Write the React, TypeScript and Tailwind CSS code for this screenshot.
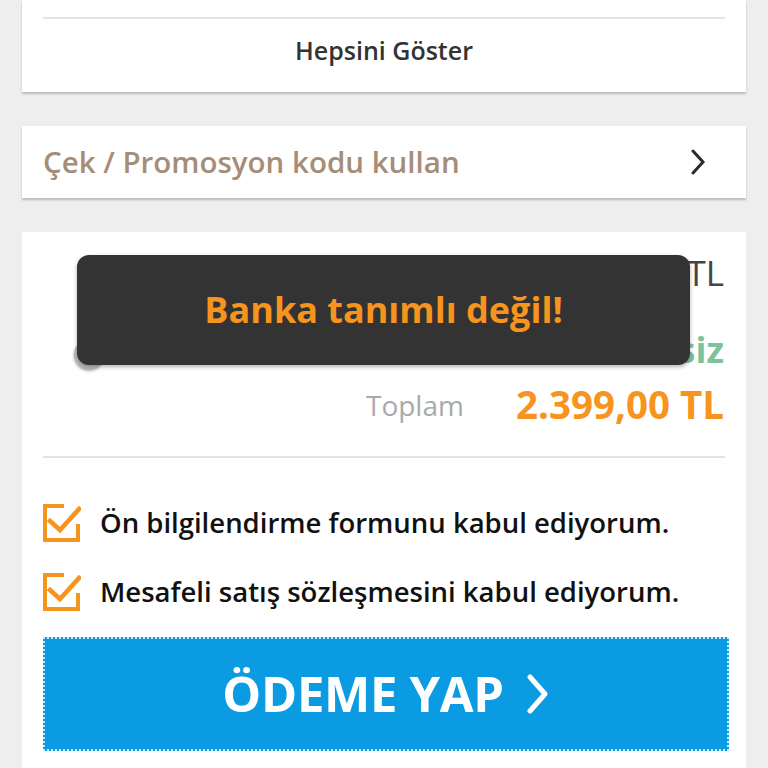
import React from "react";

function CheckIcon() {
  return (
    <svg width="38" height="38" viewBox="0 0 38 38" fill="none" className="shrink-0">
      <path d="M21 2 H2 V36 H35 V20" stroke="#f7941d" strokeWidth="4" />
      <path d="M7 17 L17 26 L36 5" stroke="#f7941d" strokeWidth="4.5" strokeLinecap="square" />
    </svg>
  );
}

function Agreement({ text }: { text: string }) {
  return (
    <div className="flex items-center h-[48px] gap-[19px]">
      <CheckIcon />
      <span className="text-[27.5px] font-semibold text-[#111]">{text}</span>
    </div>
  );
}

export default function App() {
  return (
    <div
      className="w-[768px] h-[768px] overflow-hidden bg-[#eeeeee]"
      style={{ fontFamily: '"Open Sans", "Noto Sans", sans-serif' }}
    >
      <div className="mx-[22px] flex flex-col gap-[34px]">
        {/* Product list card (top cut off) */}
        <div className="bg-white shadow-[0_2px_2px_rgba(0,0,0,0.22)]">
          <div className="h-[17px]" />
          <div className="mx-[21px] border-t-2 border-[#e3e3e3]" />
          <div className="h-[73px] pb-[10px] flex items-center justify-center text-[25px] font-semibold text-[#333]">
            Hepsini Göster
          </div>
        </div>

        {/* Promo code */}
        <div className="bg-white h-[72px] flex items-center justify-between pl-[21px] pr-[40px] shadow-[0_2px_2px_rgba(0,0,0,0.22)]">
          <span className="text-[29.5px] font-semibold text-[#a58d77]">Çek / Promosyon kodu kullan</span>
          <svg width="16" height="26" viewBox="0 0 16 26" fill="none">
            <path d="M3 2 L13 13 L3 24" stroke="#2b2b2b" strokeWidth="3" strokeLinecap="round" />
          </svg>
        </div>

        {/* Summary card */}
        <div className="relative bg-white h-[600px] px-[21px]">
          <div className="mt-[17px] h-[48px] flex items-center justify-end gap-[60px] pr-[1px]">
            <span className="text-[28px] text-[#999]">Ara Toplam</span>
            <span className="text-[35px] text-[#444]">2.399,00 TL</span>
          </div>
          <div className="mt-[29px] h-[48px] flex items-center justify-between pr-[1px]">
            <div className="flex items-center ml-[31px]">
              <span className="mt-[8px] w-[30px] h-[30px] rounded-full bg-[#bdbdbd] shadow-[0_2px_3px_rgba(0,0,0,0.35)]" />
              <span className="ml-[120px] text-[28px] text-[#555]">Standart teslimat, 1</span>
            </div>
            <span className="text-[36px] font-bold text-[#7cc39b]">Ücretsiz</span>
          </div>
          <div className="mt-[3px] h-[56px] flex items-center justify-end gap-[52px] pr-[1px]">
            <span className="text-[28px] text-[#a9a9a9]">Toplam</span>
            <span className="text-[38.5px] font-bold text-[#f7941d]">2.399,00 TL</span>
          </div>
          <div className="mt-[23px] border-t-2 border-[#e3e3e3]" />
          <div className="mt-[41px] flex flex-col gap-[21px]">
            <Agreement text="Ön bilgilendirme formunu kabul ediyorum." />
            <Agreement text="Mesafeli satış sözleşmesini kabul ediyorum." />
          </div>
          <button className="mt-[21px] w-[686px] h-[114px] bg-[#0a9be3] border-2 border-dotted border-[#c9e8f8] flex items-center justify-center gap-[22px] text-white">
            <span className="text-[49px] font-bold tracking-[-0.3px]">ÖDEME YAP</span>
            <svg width="24" height="40" viewBox="0 0 24 40" fill="none">
              <path d="M4 3 L19 20 L4 37" stroke="white" strokeWidth="5" strokeLinecap="round" strokeLinejoin="round" />
            </svg>
          </button>

          {/* Toast */}
          <div className="absolute left-[55px] top-[23px] w-[613px] h-[110px] rounded-[12px] bg-[#333333] shadow-[0_2px_4px_rgba(0,0,0,0.3)] flex items-center justify-center">
            <span className="text-[36px] font-bold text-[#f7941d]">Banka tanımlı değil!</span>
          </div>
        </div>
      </div>
    </div>
  );
}
